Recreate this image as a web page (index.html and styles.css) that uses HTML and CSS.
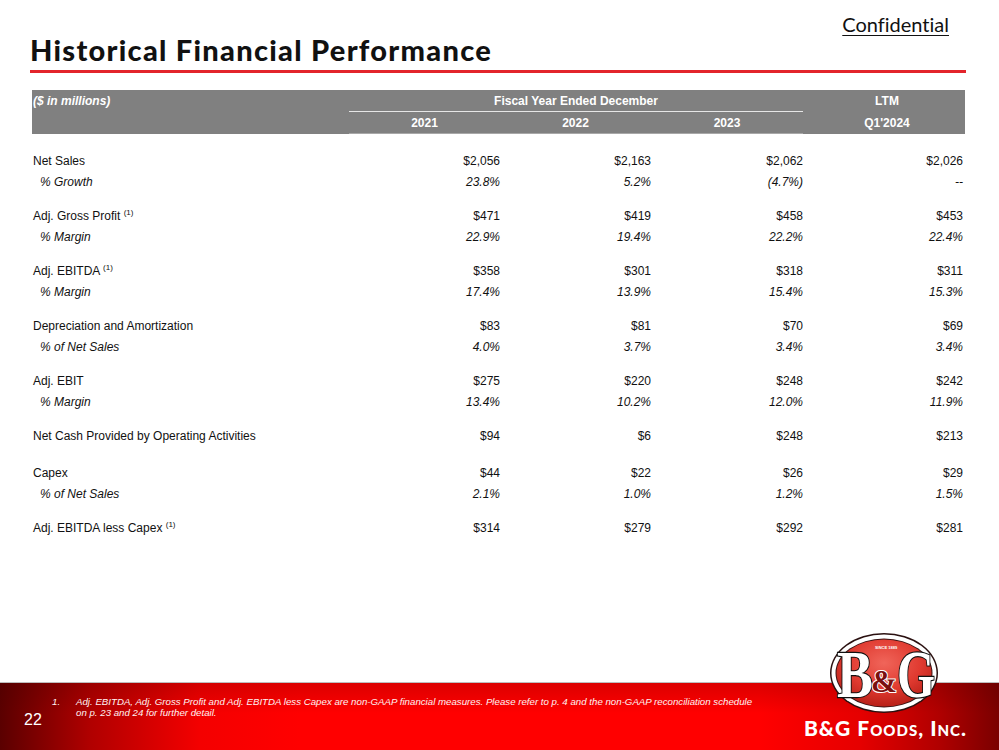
FILE: index.html
```html
<!DOCTYPE html>
<html>
<head>
<meta charset="utf-8">
<title>Historical Financial Performance</title>
<link rel="stylesheet" href="styles.css">
</head>
<body>
<div class="slide">
  <header class="top">
    <div class="conf">Confidential</div>
    <h1 class="title">Historical Financial Performance</h1>
    <div class="rule"></div>
  </header>

  <section class="fin">
    <div class="thead">
      <div class="h-units">($ in millions)</div>
      <div class="h-fy">Fiscal Year Ended December</div>
      <div class="h-ltm">LTM</div>
      <div class="h-blank"></div>
      <div class="h-yr">2021</div>
      <div class="h-yr">2022</div>
      <div class="h-yr">2023</div>
      <div class="h-q">Q1'2024</div>
    </div>

    <div class="tbody">
      <div class="grp">
        <div class="row"><span class="lbl">Net Sales</span><span>$2,056</span><span>$2,163</span><span>$2,062</span><span>$2,026</span></div>
        <div class="row sub"><span class="lbl">% Growth</span><span>23.8%</span><span>5.2%</span><span>(4.7%)</span><span>--</span></div>
      </div>
      <div class="grp">
        <div class="row"><span class="lbl">Adj. Gross Profit <sup>(1)</sup></span><span>$471</span><span>$419</span><span>$458</span><span>$453</span></div>
        <div class="row sub"><span class="lbl">% Margin</span><span>22.9%</span><span>19.4%</span><span>22.2%</span><span>22.4%</span></div>
      </div>
      <div class="grp">
        <div class="row"><span class="lbl">Adj. EBITDA <sup>(1)</sup></span><span>$358</span><span>$301</span><span>$318</span><span>$311</span></div>
        <div class="row sub"><span class="lbl">% Margin</span><span>17.4%</span><span>13.9%</span><span>15.4%</span><span>15.3%</span></div>
      </div>
      <div class="grp">
        <div class="row"><span class="lbl">Depreciation and Amortization</span><span>$83</span><span>$81</span><span>$70</span><span>$69</span></div>
        <div class="row sub"><span class="lbl">% of Net Sales</span><span>4.0%</span><span>3.7%</span><span>3.4%</span><span>3.4%</span></div>
      </div>
      <div class="grp">
        <div class="row"><span class="lbl">Adj. EBIT</span><span>$275</span><span>$220</span><span>$248</span><span>$242</span></div>
        <div class="row sub"><span class="lbl">% Margin</span><span>13.4%</span><span>10.2%</span><span>12.0%</span><span>11.9%</span></div>
      </div>
      <div class="grp single">
        <div class="row"><span class="lbl">Net Cash Provided by Operating Activities</span><span>$94</span><span>$6</span><span>$248</span><span>$213</span></div>
      </div>
      <div class="grp">
        <div class="row"><span class="lbl">Capex</span><span>$44</span><span>$22</span><span>$26</span><span>$29</span></div>
        <div class="row sub"><span class="lbl">% of Net Sales</span><span>2.1%</span><span>1.0%</span><span>1.2%</span><span>1.5%</span></div>
      </div>
      <div class="grp">
        <div class="row"><span class="lbl">Adj. EBITDA less Capex <sup>(1)</sup></span><span>$314</span><span>$279</span><span>$292</span><span>$281</span></div>
      </div>
    </div>
  </section>

  <footer class="band">
    <div class="pgnum">22</div>
    <div class="notes">
      <span class="n-num">1.</span>
      <span class="n-txt">Adj. EBITDA, Adj. Gross Profit and Adj. EBITDA less Capex are non-GAAP financial measures. Please refer to p. 4 and the non-GAAP reconciliation schedule on p. 23 and 24 for further detail.</span>
    </div>
    <div class="brand">B&amp;G Foods, Inc.</div>

    <svg class="logo" width="130" height="90" viewBox="0 0 130 90" aria-label="B&amp;G logo">
      <defs>
        <radialGradient id="ov" cx="50%" cy="35%" r="65%">
          <stop offset="0" stop-color="#f0655a"/>
          <stop offset="0.6" stop-color="#e03a30"/>
          <stop offset="1" stop-color="#b82018"/>
        </radialGradient>
      </defs>
      <ellipse cx="64" cy="43" rx="54" ry="40" fill="#2a1010"/>
      <ellipse cx="64" cy="43" rx="52.5" ry="38.5" fill="#ffffff"/>
      <ellipse cx="64" cy="43" rx="48.5" ry="34.5" fill="#3a1414"/>
      <ellipse cx="64" cy="43" rx="47.5" ry="33.5" fill="url(#ov)"/>
      <text x="66" y="19" class="since" text-anchor="middle">SINCE 1889</text>
      <text x="17" y="67" class="bg" textLength="36" lengthAdjust="spacingAndGlyphs">B</text>
      <text x="51" y="62" class="amp" textLength="26" lengthAdjust="spacingAndGlyphs">&amp;</text>
      <text x="77" y="67" class="bg" textLength="38" lengthAdjust="spacingAndGlyphs">G</text>
    </svg>
  </footer>
</div>
</body>
</html>
```

FILE: styles.css
```css
* { box-sizing: border-box; }

html, body {
  margin: 0;
  padding: 0;
  background: #ffffff;
}

.slide {
  width: 999px;
  height: 750px;
  display: flex;
  flex-direction: column;
  font-family: "Liberation Sans", Arial, sans-serif;
  color: #111111;
  overflow: hidden;
}

/* ---------- header ---------- */
.top {
  display: flex;
  flex-direction: column;
  padding-top: 14px;
}

.conf {
  align-self: flex-end;
  margin-right: 50px;
  font-family: "Lato", "DejaVu Sans", sans-serif;
  font-size: 20px;
  line-height: 20px;
  color: #111;
  text-decoration: underline;
  text-decoration-thickness: 1px;
  text-underline-offset: 3px;
  font-variant-ligatures: none;
}

.title {
  margin: 0;
  padding-left: 30px;
  font-family: "Lato", "DejaVu Sans", sans-serif;
  font-weight: 900;
  font-size: 29px;
  line-height: 32px;
  letter-spacing: 1.28px;
  color: #111;
}

.rule {
  margin: 4px 33px 0 30px;
  height: 3px;
  background: #e3242b;
}

/* ---------- table ---------- */
.fin {
  margin: 17px 34px 0 32px;
}

.thead {
  display: grid;
  grid-template-columns: 317px 151px 151px 152px 162px;
  grid-template-rows: 22px 22px;
  background: #808080;
  color: #ffffff;
  font-weight: bold;
  font-size: 12px;
}

.thead > div {
  display: flex;
  align-items: center;
  justify-content: center;
}

.h-units {
  justify-content: flex-start !important;
  padding-left: 1px;
  font-style: italic;
}

.h-fy {
  grid-column: 2 / 5;
  border-bottom: 1px solid #e6e6e6;
}

.h-yr {
  border-bottom: 1px solid #a8a8a8;
}

.h-ltm, .h-q {
  padding-left: 6px;
}

.tbody {
  padding-top: 17px;
}

.grp {
  margin-bottom: 14px;
}

.grp.single {
  margin-bottom: 17px;
}

.row {
  display: grid;
  grid-template-columns: 317px 151px 151px 152px 162px;
  height: 20px;
  align-items: center;
  font-size: 12px;
  color: #111;
}

.row.sub {
  font-style: italic;
  height: 21px;
}

.row > span {
  text-align: right;
}

.row > span:nth-child(5) {
  padding-right: 2px;
}

.row > .lbl {
  text-align: left;
  padding-left: 1px;
}

.row.sub > .lbl {
  padding-left: 8px;
}

.row sup {
  font-size: 8px;
  vertical-align: 5px;
  line-height: 0;
}

/* ---------- footer ---------- */
.band {
  margin-top: auto;
  position: relative;
  height: 68px;
  display: flex;
  border-top: 1px solid #bdbdbd;
  background:
    linear-gradient(to bottom, rgba(60, 0, 0, 0.18) 0%, rgba(60, 0, 0, 0) 45%),
    linear-gradient(to right, #5a0000 0%, #b00000 9%, #f40000 20%, #ff0000 30%, #ff0000 76%, #e60000 86%, #b00000 94%, #7a0000 100%);
  color: #ffffff;
}

.pgnum {
  width: 52px;
  padding-left: 24px;
  padding-top: 28px;
  font-size: 16px;
  line-height: 18px;
}

.notes {
  display: grid;
  grid-template-columns: 24px 686px;
  padding-top: 13px;
  font-size: 9.7px;
  line-height: 11px;
  font-style: italic;
  align-content: start;
  color: #fff3f3;
}

.brand {
  margin-left: auto;
  padding-top: 35px;
  padding-right: 32px;
  font-family: "Lato", "DejaVu Sans", sans-serif;
  font-weight: 900;
  font-size: 21px;
  line-height: 20px;
  font-variant: small-caps;
  letter-spacing: 1px;
  white-space: nowrap;
}

.logo {
  position: absolute;
  left: 820px;
  top: -53px;
}

.logo .since {
  font-family: "Liberation Sans", Arial, sans-serif;
  font-size: 4px;
  font-weight: bold;
  fill: #ffffff;
}

.logo .bg {
  font-family: "Liberation Serif", "Times New Roman", serif;
  font-weight: bold;
  font-size: 68px;
  fill: #ffffff;
  stroke: #111111;
  stroke-width: 2.4px;
  paint-order: stroke;
}

.logo .amp {
  font-family: "Liberation Serif", "Times New Roman", serif;
  font-weight: bold;
  font-size: 32px;
  fill: #7a1010;
  stroke: #ffffff;
  stroke-width: 2px;
  paint-order: stroke;
}
```
